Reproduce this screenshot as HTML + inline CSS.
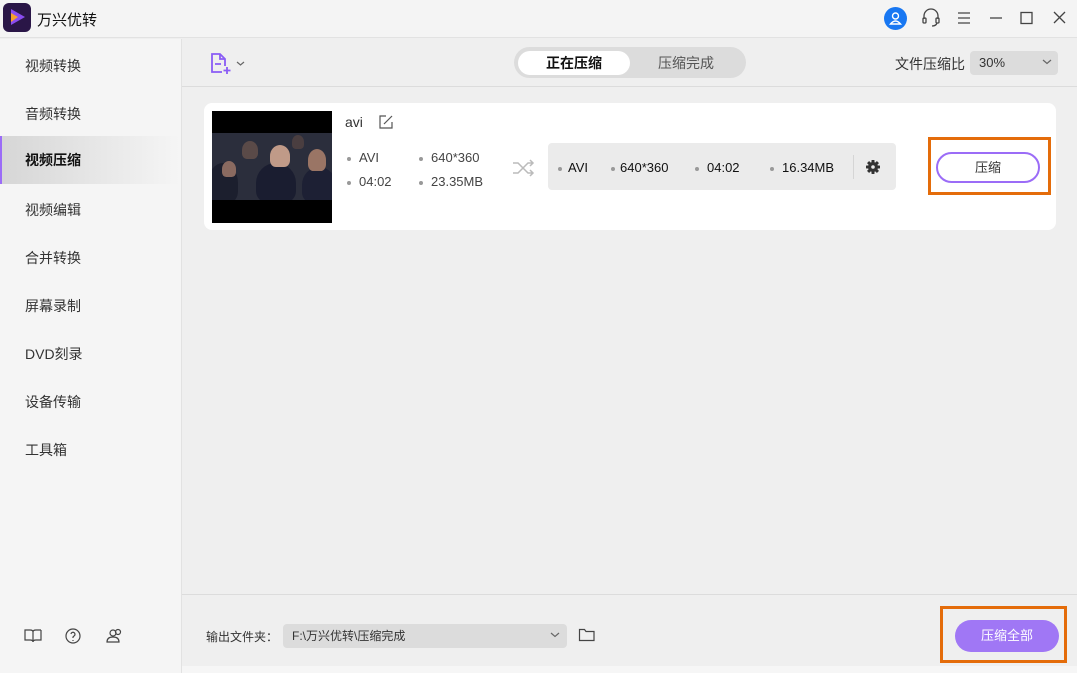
<!DOCTYPE html>
<html><head><meta charset="utf-8"><style>
*{margin:0;padding:0;box-sizing:border-box}
body{width:1077px;height:673px;overflow:hidden;background:#efefef;font-family:"Liberation Sans","Noto Sans CJK SC",sans-serif;color:#333;position:relative;font-size:14px}
.abs{position:absolute}
.title{left:0;top:0;width:1077px;height:38px;background:#f4f4f4;border-bottom:1px solid #e2e2e2}
.side{left:0;top:39px;width:182px;height:634px;background:#f5f5f5;border-right:1px solid #e2e2e2}
.item{position:absolute;left:0;width:180px;height:48px;line-height:48px;padding-left:25px;font-size:14px;color:#333}
.item.act{background:linear-gradient(90deg,#d6d6d6,#ececec 70%,#f5f5f5);border-left:2px solid #9b6cf7;padding-left:23px;font-weight:bold;color:#111}
.dot{display:inline-block;width:4px;height:4px;border-radius:2px;background:#999;vertical-align:middle;margin-right:8px}
.t{font-size:13px;color:#444}
.p{position:absolute;border-radius:50% 50% 30% 30%}
</style></head><body>
<div class="abs title"></div>
<div class="abs" style="left:3px;top:3px;width:28px;height:29px;border-radius:6px;background:#2a1647"></div>
<svg class="abs" style="left:7px;top:7px" width="20" height="20"><path d="M4 2 L18 10 L4 18 Z" fill="#8a4cf0"/><path d="M4 6 L11 10 L4 15 Z" fill="#f7a02b"/></svg>
<div class="abs" style="left:37px;top:9px;font-size:15px;color:#111">万兴优转</div>
<div class="abs" style="left:884px;top:7px;width:23px;height:23px;border-radius:12px;background:#1877f2"></div>
<svg class="abs" style="left:884px;top:7px" width="23" height="23" fill="none" stroke="#fff" stroke-width="1.4"><circle cx="11.5" cy="9" r="3"/><path d="M6.5 17 Q11.5 11 16.5 17 Z"/></svg>
<svg class="abs" style="left:920px;top:6px" width="150" height="24" fill="none" stroke="#444" stroke-width="1.3"><path d="M4 13 V10 a7 7 0 0 1 14 0 V13"/><rect x="3" y="12" width="3" height="5" rx="1"/><rect x="16" y="12" width="3" height="5" rx="1"/><path d="M17 17 Q16 20 12 20"/><path d="M38 7h12M38 12h12M38 17h12"/><path d="M70 12h12"/><rect x="101" y="6.5" width="11" height="11"/><path d="M134 6l11 11M145 6l-11 11"/></svg>
<div class="abs side"></div>
<div class="item" style="top:42px">视频转换</div>
<div class="item" style="top:90px">音频转换</div>
<div class="item act" style="top:136px">视频压缩</div>
<div class="item" style="top:186px">视频编辑</div>
<div class="item" style="top:234px">合并转换</div>
<div class="item" style="top:282px">屏幕录制</div>
<div class="item" style="top:330px">DVD刻录</div>
<div class="item" style="top:378px">设备传输</div>
<div class="item" style="top:426px">工具箱</div>
<svg class="abs" style="left:22px;top:626px" width="112" height="20" fill="none" stroke="#444" stroke-width="1.2"><path d="M3 4h5q3 0 3 2v10q0-2-3-2h-5zM19 4h-5q-3 0-3 2"/><path d="M19 4v10h-5q-3 0-3 2"/><circle cx="51" cy="10" r="7"/><path d="M49 8a2 2 0 1 1 3 2l-1 1v1M51 14v1"/><circle cx="91" cy="7" r="3"/><circle cx="96" cy="6" r="2.5"/><path d="M85 16q0-5 6-5t6 5z"/></svg>
<div class="abs" style="left:182px;top:86px;width:895px;height:1px;background:#dcdcdc"></div>
<svg class="abs" style="left:210px;top:52px" width="40" height="24" fill="none" stroke="#8a5cf5" stroke-width="1.8"><path d="M12 20H2V2h8l5 5v7"/><path d="M10 2v5h5"/><path d="M5 12h6M17 15v7M13.5 18.5h7"/><path d="M27 10l3.5 3 3.5-3" stroke="#666" stroke-width="1.2"/></svg>
<div class="abs" style="left:514px;top:47px;width:232px;height:31px;border-radius:16px;background:#dcdcdc"></div>
<div class="abs" style="left:518px;top:51px;width:112px;height:24px;border-radius:12px;background:#fff;text-align:center;line-height:24px;font-weight:bold;font-size:14px;color:#111">正在压缩</div>
<div class="abs" style="left:630px;top:51px;width:112px;line-height:24px;text-align:center;font-size:14px;color:#555">压缩完成</div>
<div class="abs" style="left:895px;top:54px;font-size:14px;color:#333">文件压缩比</div>
<div class="abs" style="left:970px;top:51px;width:88px;height:24px;border-radius:4px;background:#dcdcdc;font-size:13px;line-height:24px;padding-left:9px">30%</div>
<svg class="abs" style="left:1042px;top:58px" width="10" height="8" fill="none" stroke="#666" stroke-width="1.2"><path d="M1 2l4 3.5 4-3.5"/></svg>
<div class="abs" style="left:204px;top:103px;width:852px;height:127px;border-radius:8px;background:#fff"></div>
<div class="abs" style="left:212px;top:111px;width:120px;height:112px;background:#000"></div>
<div class="abs" style="left:212px;top:133px;width:120px;height:67px;background:#2b2e3c;overflow:hidden">
<div class="p" style="left:-4px;top:30px;width:30px;height:40px;background:#1c1f2e"></div>
<div class="p" style="left:10px;top:28px;width:14px;height:16px;background:#8a6a60"></div>
<div class="p" style="left:30px;top:8px;width:16px;height:18px;background:#5a4a48"></div>
<div class="p" style="left:44px;top:30px;width:40px;height:40px;background:#1a1d30"></div>
<div class="p" style="left:58px;top:12px;width:20px;height:22px;background:#c09a88"></div>
<div class="p" style="left:90px;top:34px;width:34px;height:36px;background:#1d2034"></div>
<div class="p" style="left:96px;top:16px;width:18px;height:22px;background:#9a7565"></div>
<div class="p" style="left:80px;top:2px;width:12px;height:14px;background:#4a3e40"></div>
</div>
<div class="abs" style="left:345px;top:114px;font-size:14px;color:#333">avi</div>
<svg class="abs" style="left:378px;top:114px" width="16" height="16" fill="none" stroke="#555" stroke-width="1.2"><path d="M8 2H2v12h12V8"/><path d="M6 10l8-8"/></svg>
<div class="abs t" style="left:347px;top:150px"><span class="dot"></span>AVI</div>
<div class="abs t" style="left:419px;top:150px"><span class="dot"></span>640*360</div>
<div class="abs t" style="left:347px;top:174px"><span class="dot"></span>04:02</div>
<div class="abs t" style="left:419px;top:174px"><span class="dot"></span>23.35MB</div>
<svg class="abs" style="left:512px;top:158px" width="24" height="20" fill="none" stroke="#bbb" stroke-width="1.5"><path d="M1 5h5l10 10h5M1 15h5l10-10h5M18 2l3 3-3 3M18 12l3 3-3 3"/></svg>
<div class="abs" style="left:548px;top:143px;width:348px;height:47px;border-radius:4px;background:#ebebeb"></div>
<div class="abs t" style="left:558px;top:160px;color:#111"><span class="dot" style="margin-right:6px"></span>AVI</div>
<div class="abs t" style="left:611px;top:160px;color:#111"><span class="dot" style="margin-right:5px"></span>640*360</div>
<div class="abs t" style="left:695px;top:160px;color:#111"><span class="dot"></span>04:02</div>
<div class="abs t" style="left:770px;top:160px;color:#111"><span class="dot"></span>16.34MB</div>
<div class="abs" style="left:853px;top:155px;width:1px;height:24px;background:#d5d5d5"></div>
<svg class="abs" style="left:865px;top:159px" width="16" height="16"><g fill="#333"><rect x="6.5" y="1" width="3" height="14" rx="0.5"/><rect x="6.5" y="1" width="3" height="14" rx="0.5" transform="rotate(45 8 8)"/><rect x="6.5" y="1" width="3" height="14" rx="0.5" transform="rotate(90 8 8)"/><rect x="6.5" y="1" width="3" height="14" rx="0.5" transform="rotate(135 8 8)"/><circle cx="8" cy="8" r="5"/></g><circle cx="8" cy="8" r="1.8" fill="#ebebeb"/></svg>
<div class="abs" style="left:928px;top:137px;width:123px;height:58px;border:3px solid #e46c0a"></div>
<div class="abs" style="left:936px;top:152px;width:104px;height:31px;border-radius:16px;border:2px solid #9b6cf7;background:#fff;text-align:center;line-height:27px;font-size:13px;color:#333">压缩</div>
<div class="abs" style="left:182px;top:594px;width:895px;height:1px;background:#dcdcdc"></div>
<div class="abs" style="left:182px;top:666px;width:895px;height:7px;background:#f6f6f6"></div>
<div class="abs" style="left:206px;top:628px;font-size:12px;color:#333">输出文件夹：</div>
<div class="abs" style="left:283px;top:624px;width:284px;height:24px;border-radius:4px;background:#dcdcdc;font-size:12px;line-height:24px;padding-left:9px;color:#333">F:\万兴优转\压缩完成</div>
<svg class="abs" style="left:550px;top:631px" width="10" height="8" fill="none" stroke="#666" stroke-width="1.2"><path d="M1 2l4 3.5 4-3.5"/></svg>
<svg class="abs" style="left:578px;top:627px" width="18" height="16" fill="none" stroke="#444" stroke-width="1.2"><path d="M1.5 2.5h5l1.5 2h8v9h-14.5z"/></svg>
<div class="abs" style="left:940px;top:606px;width:127px;height:57px;border:3px solid #e46c0a"></div>
<div class="abs" style="left:955px;top:620px;width:104px;height:32px;border-radius:16px;background:#a077f5;color:#fff;text-align:center;line-height:32px;font-size:13px">压缩全部</div>
</body></html>
